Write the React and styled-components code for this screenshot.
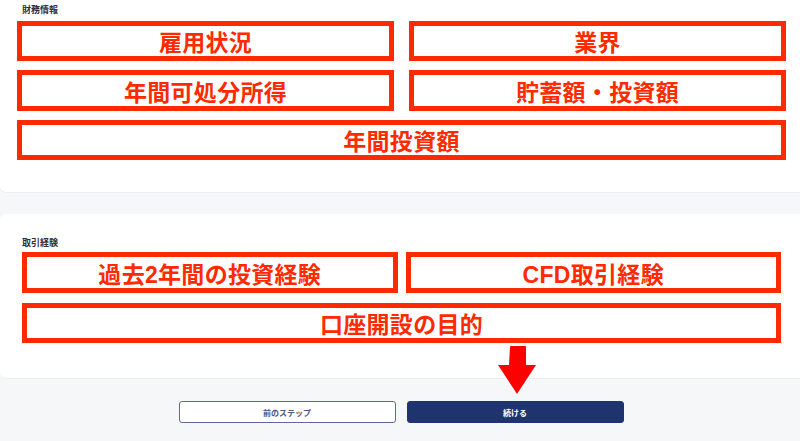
import React from "react";
import styled, { createGlobalStyle } from "styled-components";

const GlobalStyle = createGlobalStyle`
  html, body { margin: 0; padding: 0; background: #f6f7f9; }
  body { font-family: "Liberation Sans", "Noto Sans CJK JP", sans-serif; }
`;

const Page = styled.div`
  position: relative;
  width: 800px;
  height: 441px;
  overflow: hidden;
  background: #f6f7f9;
`;

const Card = styled.section`
  background: #ffffff;
  border-radius: ${(p) => p.$radius};
  border-bottom: 1px solid #eceef2;
  padding: ${(p) => p.$padding};
  margin-top: ${(p) => p.$top || "0px"};
`;

const Title = styled.h3`
  margin: 0 0 ${(p) => p.$gap} 0;
  font-size: 9px;
  line-height: 12px;
  font-weight: 700;
  color: #2f2f33;
  padding-left: ${(p) => p.$indent};
`;

const Grid = styled.div`
  display: grid;
  grid-template-columns: 1fr 1fr;
  column-gap: ${(p) => p.$colGap};
  row-gap: ${(p) => p.$rowGap};
`;

const RedBox = styled.div`
  grid-column: ${(p) => (p.$full ? "1 / span 2" : "auto")};
  height: ${(p) => p.$h || "40px"};
  box-sizing: border-box;
  border: 5px solid #ff2a00;
  background: #ffffff;
  display: flex;
  align-items: center;
  justify-content: center;
  color: #ff2a00;
  font-size: 23px;
  font-weight: 700;
  letter-spacing: 0.3px;
  white-space: nowrap;
`;

const Footer = styled.div`
  display: flex;
  justify-content: center;
  gap: 11px;
  padding-top: 22px;
  padding-left: 2px;
`;

const Button = styled.button`
  width: 217px;
  height: 22px;
  box-sizing: border-box;
  border-radius: 3px;
  font-family: inherit;
  font-size: 8px;
  font-weight: 700;
  cursor: pointer;
  border: 1px solid ${(p) => (p.$primary ? "#1f336f" : "#5d6b9b")};
  background: ${(p) => (p.$primary ? "#1f336f" : "#ffffff")};
  color: ${(p) => (p.$primary ? "#ffffff" : "#4c5682")};
`;

const ArrowWrap = styled.div`
  position: absolute;
  left: 494px;
  top: 344px;
  width: 46px;
  height: 56px;
  pointer-events: none;
`;

const Arrow = () => (
  <ArrowWrap>
    <svg width="46" height="56" viewBox="0 0 46 56">
      <path
        d="M16 3 Q16 2 17 2 L31 2 Q32 2 32 3 L32 21 L42 21 L23 50 L4 21 L15 21 Z"
        fill="#ff0000"
        stroke="#ffffff"
        strokeWidth="3"
        strokeLinejoin="round"
        paintOrder="stroke"
      />
    </svg>
  </ArrowWrap>
);

export default function App() {
  return (
    <>
      <GlobalStyle />
      <Page>
        <Card $radius="0 0 0 6px" $padding="4px 14px 32px 17px">
          <Title $gap="5px" $indent="5px">財務情報</Title>
          <Grid $colGap="15px" $rowGap="9px">
            <RedBox>雇用状況</RedBox>
            <RedBox>業界</RedBox>
            <RedBox $h="41px">年間可処分所得</RedBox>
            <RedBox $h="41px">貯蓄額・投資額</RedBox>
            <RedBox $full>年間投資額</RedBox>
          </Grid>
        </Card>
        <Card $radius="6px 0 0 6px" $padding="23px 19px 35px 22px" $top="21px">
          <Title $gap="3px" $indent="0px">取引経験</Title>
          <Grid $colGap="8px" $rowGap="10px">
            <RedBox $h="41px">過去2年間の投資経験</RedBox>
            <RedBox $h="41px">CFD取引経験</RedBox>
            <RedBox $full>口座開設の目的</RedBox>
          </Grid>
        </Card>
        <Footer>
          <Button>前のステップ</Button>
          <Button $primary>続ける</Button>
        </Footer>
        <Arrow />
      </Page>
    </>
  );
}
